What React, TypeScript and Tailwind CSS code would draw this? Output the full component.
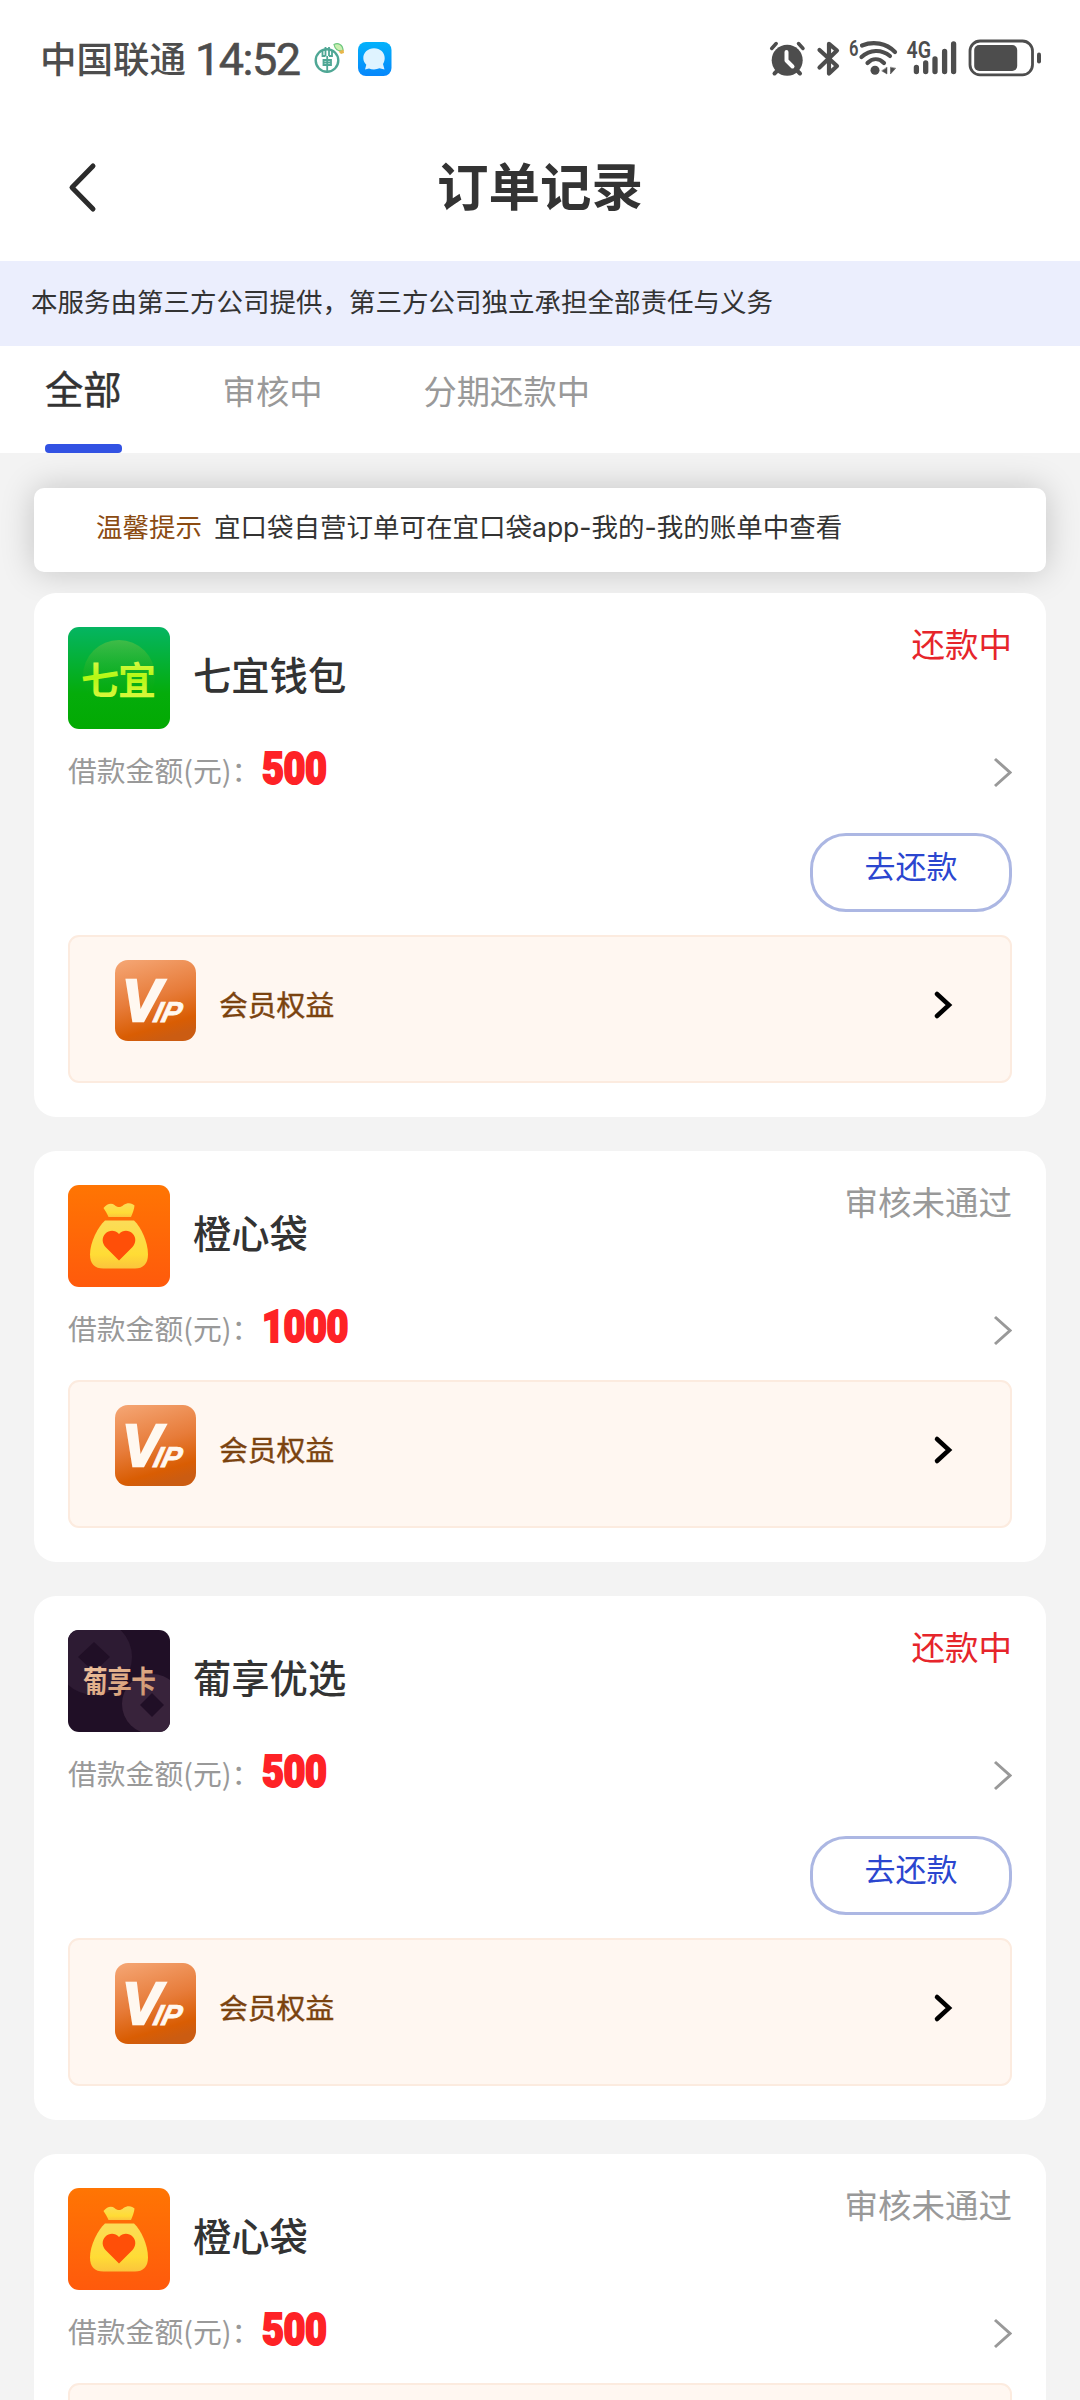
import type { ReactNode } from "react";

type LogoKind = "qiyi" | "bag" | "grape";

interface Order {
  id: number;
  name: string;
  logo: LogoKind;
  status: string;
  amount: number;
  repayable: boolean;
}

const ORDERS: Order[] = [
  { id: 1, name: "七宜钱包", logo: "qiyi", status: "还款中", amount: 500, repayable: true },
  { id: 2, name: "橙心袋", logo: "bag", status: "审核未通过", amount: 1000, repayable: false },
  { id: 3, name: "葡享优选", logo: "grape", status: "还款中", amount: 500, repayable: true },
  { id: 4, name: "橙心袋", logo: "bag", status: "审核未通过", amount: 500, repayable: false },
];

const TABS = ["全部", "审核中", "分期还款中"];

function BankIcon() {
  return (
    <svg width="32" height="34" viewBox="0 0 32 34" fill="none">
      <circle cx="13" cy="18.500" r="11.300" stroke="#4fa795" strokeWidth="2.400" />
      <path d="M8.500 8v6h3M18 8v6h-3M11.500 5v9M15 5v9M13.200 14v17M9.500 18h7.500v5h-7.500zM9.500 20.500h7.500" stroke="#4fa795" strokeWidth="1.800" />
      <path d="M20 2.500c4-2 9 0 9 6-5 1-8-1-9-6z" fill="#c9efb0" stroke="#6cc77e" strokeWidth="1.200" />
      <path d="M24.500 9.500l5-2 .5 3.500-3 1z" fill="#e8b64a" />
    </svg>
  );
}

function MessageIcon() {
  return (
    <svg width="34" height="34" viewBox="0 0 34 34">
      <defs>
        <linearGradient id="msg" x1="0" y1="0" x2="0" y2="1">
          <stop offset="0" stopColor="#03b2fb" />
          <stop offset="1" stopColor="#0787fb" />
        </linearGradient>
      </defs>
      <rect width="33.500" height="34" rx="8" fill="url(#msg)" />
      <path
        d="M16 6.200c6.300 0 10.700 4.300 10.700 9.800 0 2.500-.7 4.300-1.700 6l1.500 5.500-5-1.200c-1.700.7-3.500 1.100-5.500 1.100-1.900 0-3.500-.4-5-1L7 27.500l1.300-4.700C6.500 21 5.300 18.800 5.300 16c0-5.500 4.700-9.800 10.700-9.800z"
        fill="#dff3ff"
      />
    </svg>
  );
}

function StatusIcons() {
  return (
    <svg width="276" height="44" viewBox="0 0 276 44" fill="none" stroke="#4d4d4d" strokeLinecap="round" strokeLinejoin="round">
      {/* alarm */}
      <circle cx="20.200" cy="23.200" r="15.500" fill="#4d4d4d" stroke="none" />
      <path d="M19.500 15v8.500l6 6" stroke="#fff" strokeWidth="4" />
      <path d="M4.700 11.500l4.500-5M31.500 6.500l4.500 5" strokeWidth="3.500" />
      <path d="M7.500 36.500l3-3M30 33.500l3 3" strokeWidth="4" />
      {/* bluetooth */}
      <path d="M52.500 13L70 29l-8 7.500V6.800l8 6.700L52.500 30.500" strokeWidth="4.200" />
      {/* wifi */}
      <path d="M95 8.500c11.500-4.500 24-2.500 33 6.500M94.500 20c8.500-7.700 20-8 28.500-1M100.500 26c5-5 11.500-5 16.500 0" strokeWidth="4.200" />
      <circle cx="108" cy="33.300" r="4.500" fill="#4d4d4d" stroke="none" />
      <path d="M120 30.500v6.500l-5-3zM123.500 30.500v6.500l5-5.500z" fill="#4d4d4d" strokeWidth=".5" />
      <text x="82" y="18.500" fontSize="22" fontWeight="600" fontFamily="Roboto, sans-serif" fill="#4d4d4d" stroke="none" textLength="9.500" lengthAdjust="spacingAndGlyphs">
        6
      </text>
      {/* mobile signal */}
      <text x="139.500" y="20.500" fontSize="23" fontWeight="600" fontFamily="Roboto, sans-serif" fill="#4d4d4d" stroke="none" textLength="24.500" lengthAdjust="spacingAndGlyphs">
        4G
      </text>
      <path d="M149.400 30.500v4M158.700 26v8.500M168 22v12.500M177.600 14.500v20M186.600 7v27.500" strokeWidth="5.300" />
      {/* battery */}
      <rect x="203" y="4" width="62.500" height="33.800" rx="10" strokeWidth="2.800" />
      <rect x="207.200" y="8" width="43" height="26" rx="5" fill="#4d4d4d" stroke="none" />
      <path d="M272 17.500v7" strokeWidth="4" />
    </svg>
  );
}

function StatusBar() {
  return (
    <div className="flex h-[117px] items-center justify-between pr-[37px] pl-[40px]">
      <div className="flex items-center text-[#4d4d4d]">
        <span className="pb-px text-[36.500px] leading-none font-medium">中国联通</span>
        <span className="ml-[9px] pt-[2px] font-[Roboto] text-[45px] leading-none tracking-[-1.500px] [-webkit-text-stroke:0.6px_#4d4d4d]">14:52</span>
        <span className="ml-[14px]">
          <BankIcon />
        </span>
        <span className="ml-[12px]">
          <MessageIcon />
        </span>
      </div>
      <StatusIcons />
    </div>
  );
}

function QiyiLogo() {
  return (
    <svg width="102" height="102" viewBox="0 0 102 102">
      <defs>
        <linearGradient id="qiyi-bg" x1="0" y1="0" x2="0" y2="1">
          <stop offset="0" stopColor="#05b562" />
          <stop offset=".65" stopColor="#05ac0b" />
          <stop offset="1" stopColor="#02aa02" />
        </linearGradient>
        <linearGradient id="qiyi-orb" x1="0" y1="0" x2="0" y2="1">
          <stop offset="0" stopColor="#5fc043" stopOpacity=".65" />
          <stop offset=".8" stopColor="#0aa80a" stopOpacity="0" />
        </linearGradient>
        <linearGradient id="qiyi-text" x1="0" y1="0" x2="0" y2="1">
          <stop offset="0" stopColor="#f2f86a" />
          <stop offset=".5" stopColor="#b4f813" />
          <stop offset="1" stopColor="#e6f74a" />
        </linearGradient>
      </defs>
      <rect width="102" height="102" rx="11" fill="url(#qiyi-bg)" />
      <circle cx="51" cy="49" r="36" fill="url(#qiyi-orb)" />
      <text x="13" y="66.500" fontSize="38" fontWeight="700" fill="url(#qiyi-text)" textLength="75">
        七宜
      </text>
    </svg>
  );
}

function BagLogo() {
  return (
    <svg width="102" height="102" viewBox="0 0 102 102">
      <defs>
        <linearGradient id="bag-bg" x1="0" y1="0" x2="0" y2="1">
          <stop offset="0" stopColor="#ff7503" />
          <stop offset="1" stopColor="#ff5a0c" />
        </linearGradient>
        <linearGradient id="bag-body" x1="0" y1="0" x2="0" y2="1">
          <stop offset="0" stopColor="#fbdc58" />
          <stop offset=".7" stopColor="#ffdc35" />
          <stop offset="1" stopColor="#fbc43c" />
        </linearGradient>
      </defs>
      <rect width="102" height="102" rx="11" fill="url(#bag-bg)" />
      <path d="M35.500 23c3.500-4.500 8-5.500 11-3 3 2.700 6 2.700 9 0 4-3 9-2 11 .5-.2 3.500-2 8-3.500 11.500H40.500c-1.500-3.500-3-6-5-9z" fill="url(#bag-body)" />
      <path d="M37 35.500h29C73 42 80 57 80 69.500 80 79 75 83.500 67 83.500H35.500C26.500 83.500 22 79 22 69.500 22 57 30 42 37 35.500z" fill="url(#bag-body)" />
      <path d="M51 49c4-4.500 10-4 13.500-.5 4 4 3.500 9.500 0 13.500L51 75.500 37.500 62c-3.500-4-4-9.500 0-13.500 3.500-3.500 9.500-4 13.500.5z" fill="#ff4f08" />
    </svg>
  );
}

function GrapeLogo() {
  return (
    <svg width="102" height="102" viewBox="0 0 102 102">
      <defs>
        <clipPath id="grape-clip">
          <rect width="102" height="102" rx="11" />
        </clipPath>
        <linearGradient id="grape-text" x1="0" y1="0" x2="1" y2="1">
          <stop offset="0" stopColor="#f5c9a4" />
          <stop offset="1" stopColor="#c98f6a" />
        </linearGradient>
      </defs>
      <g clipPath="url(#grape-clip)">
        <rect width="102" height="102" fill="#200f26" />
        <circle cx="26" cy="27" r="38" fill="#2d1b33" />
        <path d="M26 12l16 15-16 15-16-15z" fill="#200f26" />
        <circle cx="84" cy="74" r="30" fill="#38233b" />
        <path d="M84 63l12 12-12 12-12-12z" fill="#200f26" />
        <g transform="translate(15 61.500) scale(.82 1)">
          <text fontSize="30" fontWeight="700" fill="url(#grape-text)" textLength="89">
            葡享卡
          </text>
        </g>
      </g>
    </svg>
  );
}

function VipIcon() {
  return (
    <svg width="81" height="81" viewBox="0 0 81 81">
      <defs>
        <linearGradient id="vip-bg" x1=".2" y1="0" x2=".5" y2="1">
          <stop offset="0" stopColor="#f4a370" />
          <stop offset=".5" stopColor="#e77c3a" />
          <stop offset=".85" stopColor="#d95d03" />
          <stop offset="1" stopColor="#cb5c12" />
        </linearGradient>
      </defs>
      <rect width="81" height="81" rx="13" fill="url(#vip-bg)" />
      <g fill="#fff8f0" stroke="#fff8f0" fontWeight="700" fontStyle="italic" fontFamily="'Liberation Sans', sans-serif">
        <text x="7" y="61" fontSize="59" strokeWidth="2.500">
          V
        </text>
        <text transform="translate(37 61.500) skewX(-14)" fontSize="29" strokeWidth=".8">
          IP
        </text>
      </g>
    </svg>
  );
}

const LOGOS: Record<LogoKind, ReactNode> = {
  qiyi: <QiyiLogo />,
  bag: <BagLogo />,
  grape: <GrapeLogo />,
};

function OrderCard({ order }: { order: Order }) {
  return (
    <article className="rounded-[22px] bg-white p-[34px]">
      <div className="flex h-[102px] justify-between">
        <div className="flex items-center">
          {LOGOS[order.logo]}
          <h2 className="ml-[23px] pb-[7px] text-[38.300px] leading-none font-medium text-[#333]">{order.name}</h2>
        </div>
        <span className={order.repayable ? "text-[33.500px] leading-[31px] text-[#e6252b]" : "text-[33.500px] leading-[31px] text-[#999]"}>
          {order.status}
        </span>
      </div>

      <div className="flex h-[93px] items-start justify-between pt-[22px]">
        <div className="flex h-[38px] items-center">
          <span className="text-[28.800px] leading-none text-[#999]">借款金额(元)：</span>
          <span className="ml-[2px] origin-left scale-x-[0.84] pb-[3px] font-[Roboto] text-[45px] leading-none font-black tracking-[-0.500px] text-[#fe2226] [-webkit-text-stroke:2px_#fe2226]">
            {order.amount}
          </span>
        </div>
        <svg className="mt-[6px]" width="20" height="32" viewBox="0 0 20 32" fill="none" stroke="#999" strokeWidth="3">
          <path d="M3 2l15 13.500L3 29" />
        </svg>
      </div>

      {order.repayable && (
        <div className="mt-[11px] mb-[23px] flex justify-end">
          <button className="h-[79px] w-[202px] rounded-[36px] border-[3px] border-[#acb7e3] pb-[17px] text-[31px] leading-none text-[#2b46cf]">
            去还款
          </button>
        </div>
      )}

      <div className="flex h-[148px] items-center justify-between rounded-[11px] border-2 border-[#fcebdf] bg-[#fff7f1] pr-[57px] pl-[45px]">
        <div className="flex items-center pb-[17px]">
          <VipIcon />
          <span className="mt-[8px] ml-[23px] text-[28.800px] leading-none text-[#7b430f] [-webkit-text-stroke:0.4px_#7b430f]">会员权益</span>
        </div>
        <svg className="mb-[9px]" width="20" height="30" viewBox="0 0 20 30" fill="none" stroke="#000" strokeWidth="4.500" strokeLinecap="round">
          <path d="M4 4l12 11L4 26" />
        </svg>
      </div>
    </article>
  );
}

export default function App() {
  return (
    <div className="h-[2400px] w-[1080px] overflow-hidden bg-[#f3f3f3] font-['Noto_Sans_CJK_SC',sans-serif]">
      <header className="h-[261px] bg-white">
        <StatusBar />
        <div className="grid h-[140px] grid-cols-[1fr_auto_1fr] items-center">
          <svg className="ml-[65px]" width="34" height="52" viewBox="0 0 34 52" fill="none" stroke="#2b2b2b" strokeWidth="5" strokeLinecap="round" strokeLinejoin="round">
            <path d="M28 5L7 26.500 28 48" />
          </svg>
          <h1 className="pb-[7px] text-[51.500px] leading-none font-bold text-[#333]">订单记录</h1>
        </div>
      </header>

      <p className="h-[85px] bg-[#ebeefd] pl-[31px] text-[26.500px] leading-[80px] text-[#333]">
        本服务由第三方公司提供，第三方公司独立承担全部责任与义务
      </p>

      <nav className="h-[107px] bg-white pl-[45px]">
        <ul className="flex gap-[101px]">
          {TABS.map((tab, i) => (
            <li
              key={tab}
              className={
                i === 0
                  ? "flex h-[107px] flex-col justify-between pt-[23px] text-[38.300px] leading-[38px] text-[#333] [-webkit-text-stroke:0.5px_#333]"
                  : "pt-[27px] text-[33.300px] leading-[34px] text-[#999]"
              }
            >
              {tab}
              {i === 0 && <span className="h-[9px] rounded-[4px] bg-[#3252e3]" />}
            </li>
          ))}
        </ul>
      </nav>

      <main className="px-[34px] pt-[35px]">
        <p className="h-[84px] rounded-[10px] bg-white pl-[62px] font-[Inter,'Noto_Sans_CJK_SC',sans-serif] text-[26.500px] leading-[79px] text-[#333] shadow-[0_0_34px_rgba(0,0,0,0.2)]">
          <span className="mr-[12px] text-[#8b4b12]">温馨提示</span>
          宜口袋自营订单可在宜口袋app-我的-我的账单中查看
        </p>
        <div className="relative mt-[21px] flex flex-col gap-[34px]">
          {ORDERS.map((order) => (
            <OrderCard key={order.id} order={order} />
          ))}
        </div>
      </main>
    </div>
  );
}
